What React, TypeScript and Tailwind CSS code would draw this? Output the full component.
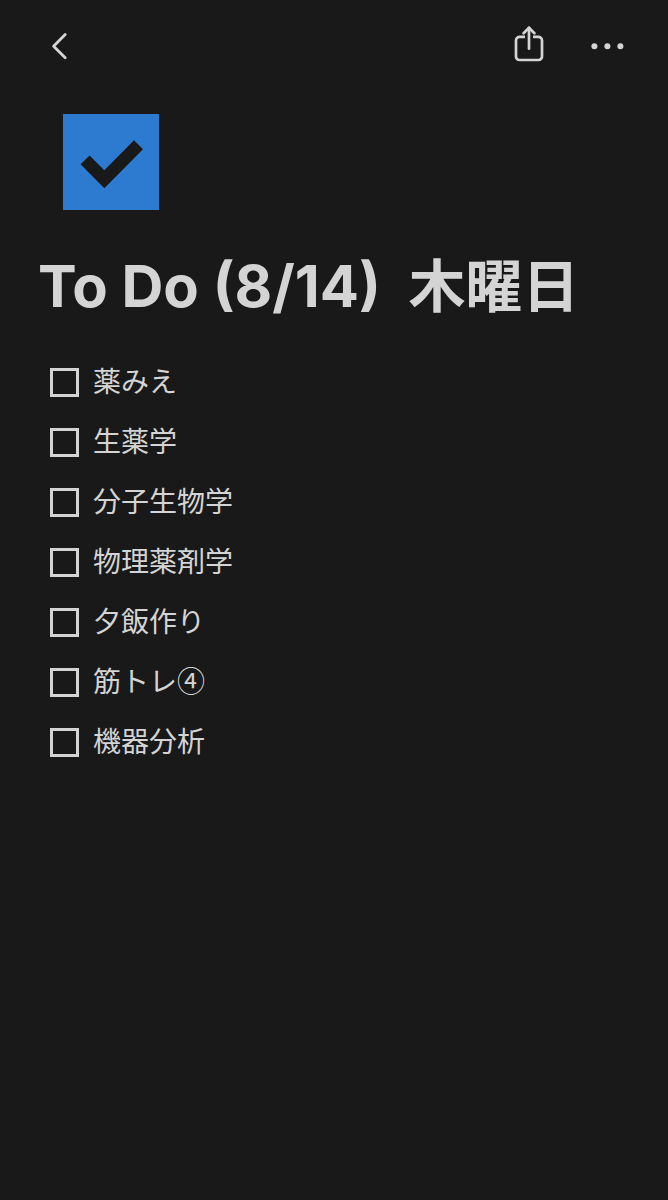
import React, { useState } from 'react';

interface Task {
  id: string;
  label: string;
}

const TASKS: Task[] = [
  { id: 'yakumie', label: '薬みえ' },
  { id: 'shoyaku', label: '生薬学' },
  { id: 'molecular-biology', label: '分子生物学' },
  { id: 'physical-pharmaceutics', label: '物理薬剤学' },
  { id: 'dinner', label: '夕飯作り' },
  { id: 'workout', label: '筋トレ④' },
  { id: 'instrumental-analysis', label: '機器分析' },
];

const BackIcon = () => (
  <svg viewBox="0 0 24 32" className="h-8 w-6" fill="none" stroke="currentColor" strokeWidth="2.8" strokeLinecap="round" strokeLinejoin="round">
    <path d="M17.2 4.6 5.6 16.2l11.6 11.6" />
  </svg>
);

const ShareIcon = () => (
  <svg viewBox="0 0 34 40" className="h-10 w-[34px]" fill="none" stroke="currentColor" strokeWidth="2.7" strokeLinecap="round" strokeLinejoin="round">
    <path d="M13 10.8H7.6A3.6 3.6 0 0 0 4 14.4v16a3.6 3.6 0 0 0 3.6 3.6h18.8a3.6 3.6 0 0 0 3.6-3.6v-16a3.6 3.6 0 0 0-3.6-3.6H21" strokeLinecap="butt" />
    <path d="M17 22.7V1.8" />
    <path d="m11.6 7.2 5.4-5.4 5.4 5.4" />
  </svg>
);

const MoreIcon = () => (
  <svg viewBox="0 0 34 8" className="h-2 w-[34px]" fill="currentColor">
    <circle cx="4.4" cy="4.2" r="3" />
    <circle cx="17.4" cy="4.2" r="3" />
    <circle cx="30.4" cy="4.2" r="3" />
  </svg>
);

const PageIcon = () => (
  <svg viewBox="0 0 96 96" className="size-24" role="img" aria-label="Checked box">
    <path d="M0 0h96v96H0z" fill="#2d7bd1" />
    <path d="m17.6 50.3 9-8.8 14.7 14.8 29.7-30 9 9-38.7 39z" fill="#191919" />
  </svg>
);

const TaskRow: React.FC<{ task: Task }> = ({ task }) => {
  const [done, setDone] = useState(false);

  return (
    <li className="flex h-15 items-center gap-3.5">
      <input
        id={task.id}
        type="checkbox"
        checked={done}
        onChange={(e) => setDone(e.target.checked)}
        className="size-[29px] shrink-0 appearance-none border-3 border-[#d4d4d4] checked:border-[#2d7bd1] checked:bg-[#2d7bd1]"
      />
      <label htmlFor={task.id} className="pb-1 text-[28px] leading-10">
        {task.label}
      </label>
    </li>
  );
};

export default function App() {
  return (
    <div className="min-h-screen bg-[#191919] font-['Inter','Noto_Sans_CJK_JP',sans-serif] text-[#d4d4d4]">
      <header className="flex items-center justify-between pt-6 pr-11 pl-10">
        <button type="button" aria-label="Back" className="flex h-11 w-10 items-center justify-center">
          <BackIcon />
        </button>
        <div className="flex items-center gap-11">
          <button type="button" aria-label="Share" className="flex h-11 items-center justify-center">
            <ShareIcon />
          </button>
          <button type="button" aria-label="More" className="flex h-11 items-center justify-center">
            <MoreIcon />
          </button>
        </div>
      </header>

      <main className="px-[38px] pt-[46px]">
        <div className="pl-[25px]">
          <PageIcon />
        </div>
        <h1 className="mt-10 text-[58px] leading-[72px] font-bold whitespace-pre-wrap">
          To Do (8/14)  <span className="text-[57px]">木曜日</span>
        </h1>
        {/* Labels are all Japanese, so circled digits should come from the CJK face too */}
        <ul className="mt-[29px] pl-3 font-['Noto_Sans_CJK_JP',sans-serif]">
          {TASKS.map((task) => (
            <TaskRow key={task.id} task={task} />
          ))}
        </ul>
      </main>
    </div>
  );
}
